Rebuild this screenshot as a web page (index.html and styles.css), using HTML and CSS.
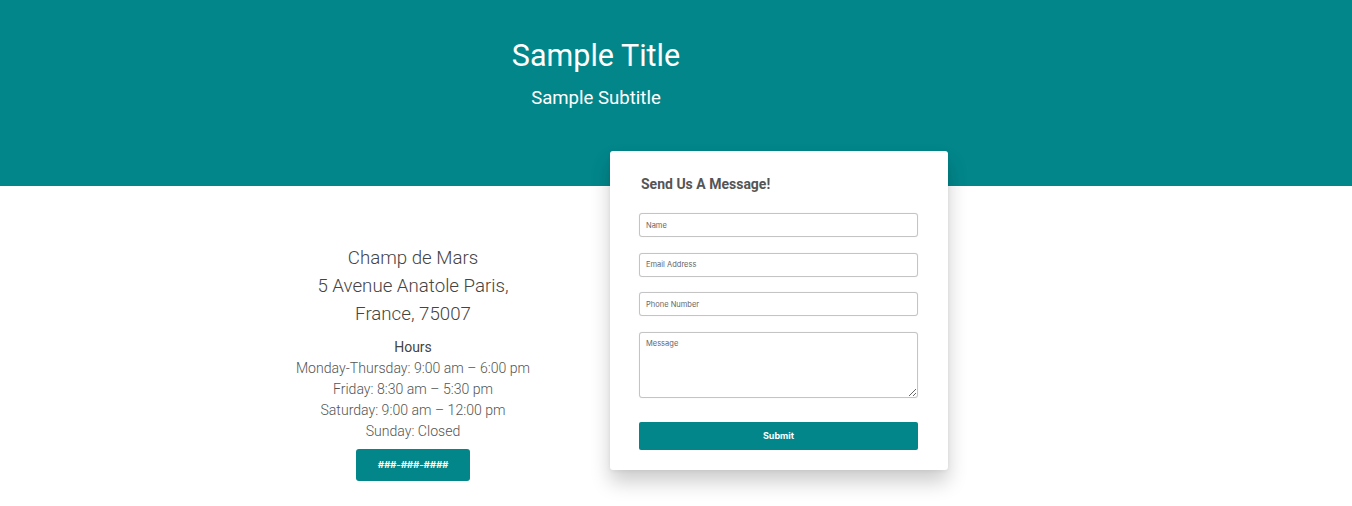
FILE: index.html
```html
<!DOCTYPE html>
<html lang="en">
<head>
<meta charset="utf-8">
<title>Contact</title>
<link rel="stylesheet" href="styles.css">
</head>
<body>
<header class="hero">
  <div class="hero-inner">
    <h1 class="hero-title">Sample Title</h1>
    <p class="hero-subtitle">Sample Subtitle</p>
  </div>
</header>
<main class="contact">
  <section class="info">
    <p class="address">Champ de Mars<br>5 Avenue Anatole Paris,<br>France, 75007</p>
    <h2 class="hours-title">Hours</h2>
    <p class="hours">Monday-Thursday: 9:00 am – 6:00 pm<br>Friday: 8:30 am – 5:30 pm<br>Saturday: 9:00 am – 12:00 pm<br>Sunday: Closed</p>
    <a class="phone-btn" href="#">###-###-####</a>
  </section>
  <form class="card">
    <h3 class="card-title">Send Us A Message!</h3>
    <input class="field" type="text" placeholder="Name">
    <input class="field" type="email" placeholder="Email Address">
    <input class="field" type="tel" placeholder="Phone Number">
    <textarea class="field field-area" placeholder="Message"></textarea>
    <button class="submit" type="button">Submit</button>
  </form>
</main>
</body>
</html>
```
FILE: styles.css
```css
* { box-sizing: border-box; }
html, body { margin: 0; padding: 0; background: #fff; }
html { height: 100%; }
body { min-height: 100%; font-family: Roboto, "Liberation Sans", sans-serif; color: #444; }

.hero {
  background: #02868a;
  height: 186px;
  padding-top: 38px;
}
.hero-inner {
  margin-left: 396px;
  width: 400px;
  text-align: center;
  color: #fff;
}
.hero-title {
  margin: 0;
  font-size: 30.5px;
  line-height: 36px;
  font-weight: 400;
}
.hero-subtitle {
  margin: 13px 0 0;
  font-size: 18.6px;
  line-height: 22px;
  font-weight: 400;
}

.contact {
  display: flex;
  align-items: flex-start;
  padding-left: 286px;
  padding-bottom: 30px;
  gap: 70px;
}
.info {
  width: 254px;
  padding-top: 58px;
  text-align: center;
}
.address {
  margin: 0;
  font-size: 18.7px;
  line-height: 28px;
  font-weight: 300;
  color: #444;
}
.hours-title {
  margin: 9px 0 0;
  font-size: 14px;
  line-height: 21px;
  font-weight: 400;
  color: #444;
}
.hours {
  margin: 0;
  font-size: 14.1px;
  line-height: 21px;
  font-weight: 300;
  color: #555;
}
.phone-btn {
  display: inline-block;
  margin-top: 7px;
  width: 114px;
  height: 32px;
  line-height: 32px;
  background: #02868a;
  color: #fff;
  border-radius: 3px;
  font-family: Inter, "Liberation Sans", sans-serif;
  font-size: 9.5px;
  font-weight: 700;
  font-style: italic;
  text-decoration: none;
}

.card {
  width: 338px;
  margin-top: -35px;
  background: #fff;
  border-radius: 3px;
  padding: 25px 30px 20px 29px;
  box-shadow: 0 12px 20px rgba(0, 0, 0, 0.2), 0 1px 4px rgba(0, 0, 0, 0.06);
  display: flex;
  flex-direction: column;
}
.card-title {
  margin: 0 0 20px 2px;
  font-size: 14px;
  line-height: 17px;
  font-weight: 700;
  color: #555;
}
.field {
  display: block;
  width: 279px;
  height: 24px;
  margin: 0 0 15.6px;
  padding: 0 6px;
  border: 1px solid #c4c4c4;
  border-radius: 3px;
  box-shadow: 0 0 1px rgba(0, 0, 0, 0.15);
  font-family: Inter, "Liberation Sans", sans-serif;
  font-size: 7.5px;
  color: #555;
  background: #fff;
}
.field::placeholder { color: #666; }
.field-area {
  height: 66px;
  margin-bottom: 24px;
  padding-top: 6px;
  resize: vertical;
}
.submit {
  width: 279px;
  height: 28px;
  border: 0;
  border-radius: 2px;
  background: #02868a;
  color: #fff;
  font-family: Inter, "Liberation Sans", sans-serif;
  font-size: 9px;
  font-weight: 700;
  cursor: pointer;
}
```
